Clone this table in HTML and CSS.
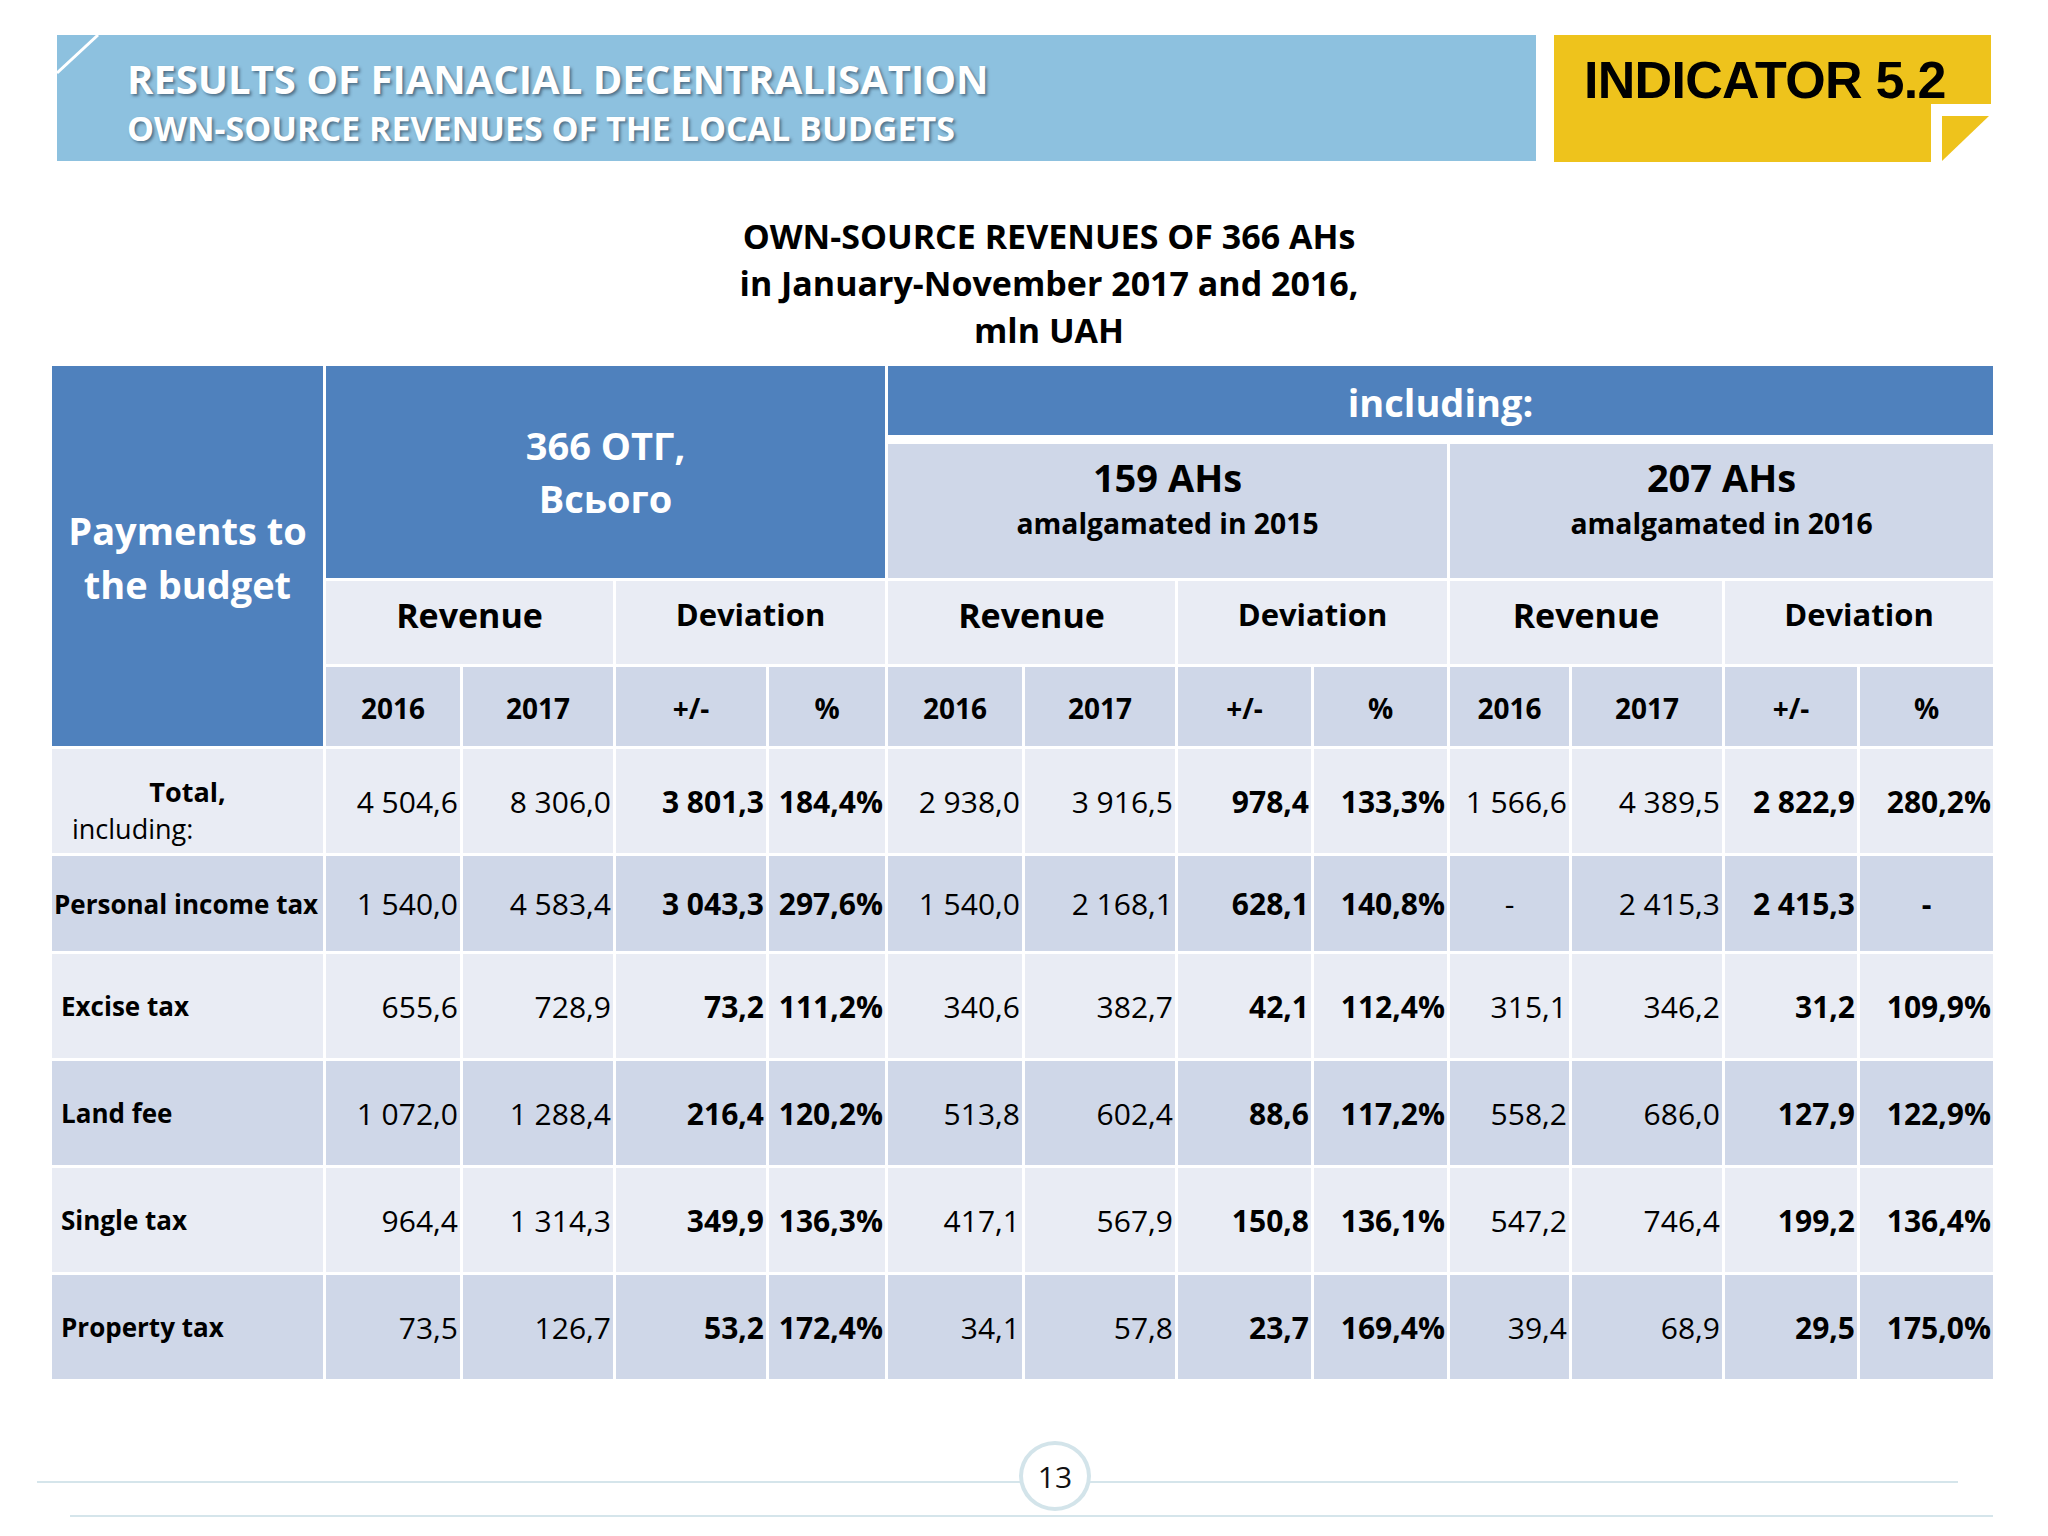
FILE: index.html
```html
<!DOCTYPE html>
<html lang="en">
<head>
<meta charset="utf-8">
<title>Own-source revenues of 366 AHs</title>
<link rel="stylesheet" href="styles.css">
</head>
<body>
<div class="slide">
  <header class="top">
    <div class="banner">
      <svg class="fold" width="46" height="42" viewBox="0 0 46 42"><line x1="41" y1="0" x2="0" y2="38" stroke="#ffffff" stroke-width="3"/></svg>
      <div class="banner-title">RESULTS OF FIANACIAL DECENTRALISATION</div>
      <div class="banner-sub">OWN-SOURCE REVENUES OF THE LOCAL BUDGETS</div>
    </div>
    <div class="indicator">
      <svg class="indicator-bg" width="437" height="127" viewBox="0 0 437 127">
        <polygon points="0,0 437,0 437,69 377,69 377,127 0,127" fill="#EEC31C"/>
        <polygon points="388,81 435,81 388,126" fill="#EEC31C"/>
      </svg>
      <div class="indicator-text">INDICATOR 5.2</div>
    </div>
  </header>

  <div class="caption">
    <div>OWN-SOURCE REVENUES OF 366 AHs</div>
    <div>in January-November 2017 and 2016,</div>
    <div>mln UAH</div>
  </div>

  <div class="grid">
    <div class="c blue payments">Payments to<br>the budget</div>
    <div class="c blue total-head">366 ОТГ,<br>Всього</div>
    <div class="c blue including">including:</div>
    <div class="c dark group g1"><span class="g-big">159 AHs</span><span class="g-small">amalgamated in 2015</span></div>
    <div class="c dark group g2"><span class="g-big">207 AHs</span><span class="g-small">amalgamated in 2016</span></div>

    <div class="c light sub rev s1">Revenue</div>
    <div class="c light sub dev s2">Deviation</div>
    <div class="c light sub rev s3">Revenue</div>
    <div class="c light sub dev s4">Deviation</div>
    <div class="c light sub rev s5">Revenue</div>
    <div class="c light sub dev s6">Deviation</div>

    <div class="c dark yr">2016</div><div class="c dark yr">2017</div><div class="c dark yr">+/-</div><div class="c dark yr">%</div>
    <div class="c dark yr">2016</div><div class="c dark yr">2017</div><div class="c dark yr">+/-</div><div class="c dark yr">%</div>
    <div class="c dark yr">2016</div><div class="c dark yr">2017</div><div class="c dark yr">+/-</div><div class="c dark yr">%</div>

    <div class="c light lbl total-lbl"><span class="t-main">Total,</span><span class="t-sub">including:</span></div>
    <div class="c light n">4&nbsp;504,6</div><div class="c light n">8&nbsp;306,0</div><div class="c light n b">3&nbsp;801,3</div><div class="c light n b">184,4%</div>
    <div class="c light n">2&nbsp;938,0</div><div class="c light n">3&nbsp;916,5</div><div class="c light n b">978,4</div><div class="c light n b">133,3%</div>
    <div class="c light n">1&nbsp;566,6</div><div class="c light n">4&nbsp;389,5</div><div class="c light n b">2&nbsp;822,9</div><div class="c light n b">280,2%</div>

    <div class="c dark lbl tight">Personal income tax</div>
    <div class="c dark n">1&nbsp;540,0</div><div class="c dark n">4&nbsp;583,4</div><div class="c dark n b">3&nbsp;043,3</div><div class="c dark n b">297,6%</div>
    <div class="c dark n">1&nbsp;540,0</div><div class="c dark n">2&nbsp;168,1</div><div class="c dark n b">628,1</div><div class="c dark n b">140,8%</div>
    <div class="c dark n ctr">-</div><div class="c dark n">2&nbsp;415,3</div><div class="c dark n b">2&nbsp;415,3</div><div class="c dark n b ctr">-</div>

    <div class="c light lbl">Excise tax</div>
    <div class="c light n">655,6</div><div class="c light n">728,9</div><div class="c light n b">73,2</div><div class="c light n b">111,2%</div>
    <div class="c light n">340,6</div><div class="c light n">382,7</div><div class="c light n b">42,1</div><div class="c light n b">112,4%</div>
    <div class="c light n">315,1</div><div class="c light n">346,2</div><div class="c light n b">31,2</div><div class="c light n b">109,9%</div>

    <div class="c dark lbl">Land fee</div>
    <div class="c dark n">1&nbsp;072,0</div><div class="c dark n">1&nbsp;288,4</div><div class="c dark n b">216,4</div><div class="c dark n b">120,2%</div>
    <div class="c dark n">513,8</div><div class="c dark n">602,4</div><div class="c dark n b">88,6</div><div class="c dark n b">117,2%</div>
    <div class="c dark n">558,2</div><div class="c dark n">686,0</div><div class="c dark n b">127,9</div><div class="c dark n b">122,9%</div>

    <div class="c light lbl">Single tax</div>
    <div class="c light n">964,4</div><div class="c light n">1&nbsp;314,3</div><div class="c light n b">349,9</div><div class="c light n b">136,3%</div>
    <div class="c light n">417,1</div><div class="c light n">567,9</div><div class="c light n b">150,8</div><div class="c light n b">136,1%</div>
    <div class="c light n">547,2</div><div class="c light n">746,4</div><div class="c light n b">199,2</div><div class="c light n b">136,4%</div>

    <div class="c dark lbl">Property tax</div>
    <div class="c dark n">73,5</div><div class="c dark n">126,7</div><div class="c dark n b">53,2</div><div class="c dark n b">172,4%</div>
    <div class="c dark n">34,1</div><div class="c dark n">57,8</div><div class="c dark n b">23,7</div><div class="c dark n b">169,4%</div>
    <div class="c dark n">39,4</div><div class="c dark n">68,9</div><div class="c dark n b">29,5</div><div class="c dark n b">175,0%</div>
  </div>

  <footer class="footer">
    <div class="rule rule-1"></div>
    <div class="rule rule-2"></div>
    <div class="page-no">13</div>
  </footer>
</div>
</body>
</html>
```

FILE: styles.css
```css
html, body {
  margin: 0;
  padding: 0;
  background: #ffffff;
}

.slide {
  width: 2048px;
  height: 1536px;
  overflow: hidden;
  font-family: "Open Sans", "Noto Sans", sans-serif;
  color: #000000;
}

/* ---------- header ---------- */
.top {
  display: flex;
  gap: 18px;
  padding: 35px 0 0 57px;
}

.banner {
  position: relative;
  width: 1479px;
  height: 126px;
  background: #8DC1DF;
  box-sizing: border-box;
  padding: 18px 0 0 70px;
  color: #ffffff;
  font-weight: 700;
  text-shadow: 2px 2px 3px rgba(40, 60, 80, 0.6);
}

.fold {
  position: absolute;
  left: 0;
  top: 0;
}

.banner-title {
  font-size: 40px;
  line-height: 52px;
  white-space: nowrap;
}

.banner-sub {
  font-size: 34px;
  line-height: 46px;
  white-space: nowrap;
}

.indicator {
  position: relative;
  width: 437px;
  height: 127px;
}

.indicator-bg {
  position: absolute;
  left: 0;
  top: 0;
}

.indicator-text {
  position: relative;
  padding: 15px 0 0 30px;
  font-family: "Liberation Sans", Arial, sans-serif;
  font-weight: 700;
  font-size: 52px;
  letter-spacing: -0.7px;
  white-space: nowrap;
}

/* ---------- caption ---------- */
.caption {
  margin-top: 51px;
  padding-left: 50px;
  text-align: center;
  font-weight: 700;
  font-size: 34px;
  line-height: 47px;
}

/* ---------- table ---------- */
.grid {
  margin: 12px 0 0 52px;
  width: 1941px;
  display: grid;
  grid-template-columns: 271px 134px 150px 150px 116px 134px 150px 133px 133px 119px 150px 132px 133px;
  grid-template-rows: 75px 134px 83px 79px 104px 95px 104px 104px 104px 104px;
  gap: 3px;
}

.c {
  display: flex;
  align-items: center;
  box-sizing: border-box;
  min-width: 0;
}

.blue {
  background: #4F81BD;
  color: #ffffff;
  font-weight: 700;
}

.dark {
  background: #CFD7E8;
}

.light {
  background: #E9ECF4;
}

.payments {
  grid-column: 1;
  grid-row: 1 / 5;
  justify-content: center;
  text-align: center;
  font-size: 38px;
  line-height: 54px;
  padding-top: 2px;
}

.total-head {
  grid-column: 2 / 6;
  grid-row: 1 / 3;
  justify-content: center;
  text-align: center;
  font-size: 38px;
  line-height: 53px;
}

.including {
  grid-column: 6 / 14;
  grid-row: 1;
  align-self: start;
  height: 69px;
  justify-content: center;
  font-size: 38px;
  padding-top: 2px;
}

.group {
  flex-direction: column;
  align-items: center;
  justify-content: flex-start;
  padding-top: 9px;
  font-weight: 700;
}

.g1 { grid-column: 6 / 10; grid-row: 2; }
.g2 { grid-column: 10 / 14; grid-row: 2; }

.g-big {
  font-size: 38px;
  line-height: 48px;
}

.g-small {
  font-size: 28.3px;
  font-weight: 700;
  line-height: 45px;
}

.sub {
  grid-row: 3;
  justify-content: center;
  font-weight: 700;
  padding-bottom: 18px;
}

.sub.rev { font-size: 34px; padding-bottom: 16px; }
.sub.dev { font-size: 31px; }

.s1 { grid-column: 2 / 4; }
.s2 { grid-column: 4 / 6; }
.s3 { grid-column: 6 / 8; }
.s4 { grid-column: 8 / 10; }
.s5 { grid-column: 10 / 12; }
.s6 { grid-column: 12 / 14; }

.yr {
  grid-row: 4;
  justify-content: center;
  font-weight: 700;
  font-size: 28px;
  padding-top: 2px;
}

.lbl {
  font-weight: 700;
  font-size: 26px;
  padding-left: 9px;
  white-space: nowrap;
}

.lbl.tight {
  padding-left: 2px;
}

.total-lbl {
  flex-direction: column;
  align-items: stretch;
  justify-content: center;
  padding: 18px 0 0 0;
  font-size: 27px;
  line-height: 37px;
}

.t-main {
  text-align: center;
  font-weight: 700;
}

.t-sub {
  font-weight: 400;
  padding-left: 20px;
}

.n {
  justify-content: flex-end;
  padding-right: 2px;
  font-size: 30px;
  white-space: nowrap;
}

.n.b {
  font-weight: 700;
}

.n.ctr {
  justify-content: center;
  padding-right: 0;
}

/* ---------- footer ---------- */
.footer {
  position: relative;
  margin-top: 62px;
  padding-top: 40px;
  height: 95px;
  box-sizing: border-box;
}

.rule {
  height: 2px;
  background: #D5E5EB;
}

.rule-1 {
  margin-left: 37px;
  width: 1921px;
}

.rule-2 {
  margin: 32px 0 0 70px;
  width: 1923px;
}

.page-no {
  position: absolute;
  left: 1019px;
  top: 0;
  width: 72px;
  height: 70px;
  box-sizing: border-box;
  border: 4px solid #D3E4EA;
  border-radius: 50%;
  background: #ffffff;
  display: flex;
  align-items: center;
  justify-content: center;
  font-size: 30px;
  color: #111111;
}
```
